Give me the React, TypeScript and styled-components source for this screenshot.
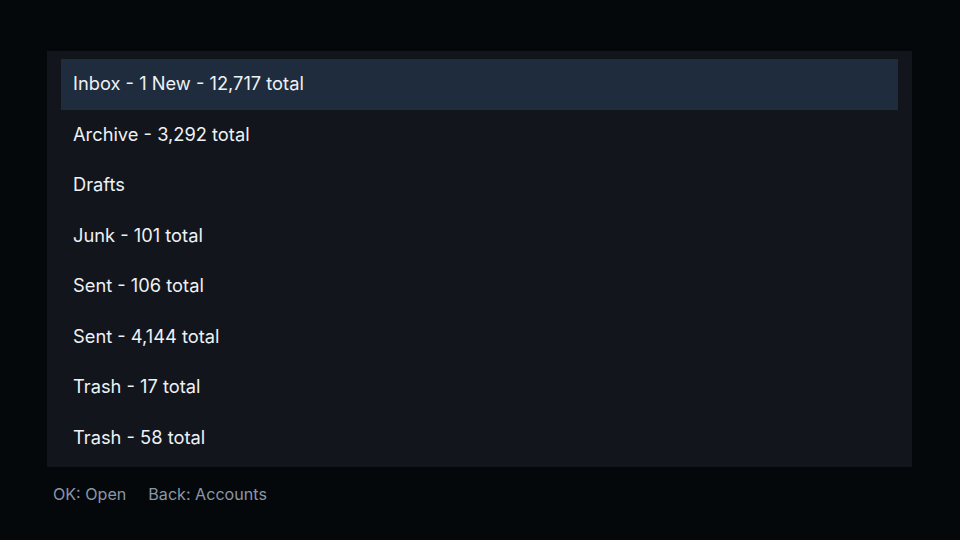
import React from "react";
import styled, { createGlobalStyle } from "styled-components";

const Global = createGlobalStyle`
  html, body { margin: 0; padding: 0; background: #05080b; }
  body { font-family: Inter, "Noto Sans", sans-serif; }
`;

const Screen = styled.div`
  width: 960px;
  height: 540px;
  box-sizing: border-box;
  padding: 51px 48px 0 47px;
  display: flex;
  flex-direction: column;
  background: #05080b;
`;

const Panel = styled.div`
  background: #12151c;
  padding: 8px 14px 4px 14px;
  display: flex;
  flex-direction: column;
`;

const Row = styled.div<{ $selected?: boolean }>`
  height: 50.5px;
  display: flex;
  align-items: center;
  padding-left: 12px;
  padding-bottom: 2px;
  box-sizing: border-box;
  color: #eef1f5;
  font-size: 18.3px;
  background: ${(p) => (p.$selected ? "#1e2c3e" : "transparent")};
`;

const Footer = styled.div`
  display: flex;
  gap: 22px;
  padding: 17px 0 0 6px;
  font-size: 16.1px;
  color: #8b96a6;
`;

const items = [
  "Inbox - 1 New - 12,717 total",
  "Archive - 3,292 total",
  "Drafts",
  "Junk - 101 total",
  "Sent - 106 total",
  "Sent - 4,144 total",
  "Trash - 17 total",
  "Trash - 58 total",
];

export default function App() {
  return (
    <>
      <Global />
      <Screen>
        <Panel>
          {items.map((t, i) => (
            <Row key={i} $selected={i === 0}>
              {t}
            </Row>
          ))}
        </Panel>
        <Footer>
          <span>OK: Open</span>
          <span>Back: Accounts</span>
        </Footer>
      </Screen>
    </>
  );
}
